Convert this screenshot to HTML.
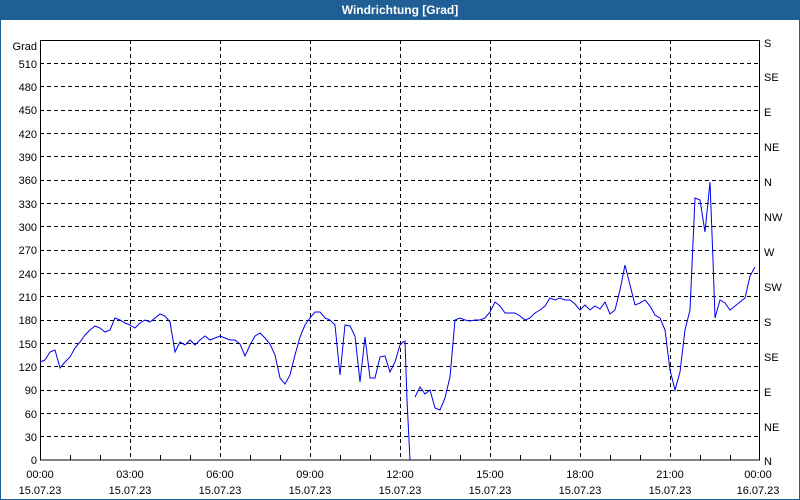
<!DOCTYPE html>
<html><head><style>
body{margin:0;width:800px;height:500px;overflow:hidden;background:#fff;font-family:"Liberation Sans",Tahoma,sans-serif}
</style></head><body>
<svg width="800" height="500" xmlns="http://www.w3.org/2000/svg" style="position:absolute;left:0;top:0">
<rect x="0" y="0" width="800" height="500" fill="#fff"/>
<rect x="0.5" y="0.5" width="799" height="499" fill="none" stroke="#1f5f95"/>
<rect x="0" y="0" width="800" height="20" fill="#1f5f95"/>
<text x="400" y="14" fill="#fff" font-size="12" font-weight="bold" text-anchor="middle">Windrichtung [Grad]</text>
<g stroke="#000" stroke-dasharray="4,3" stroke-width="1">
<line x1="40" y1="63.5" x2="760" y2="63.5"/><line x1="40" y1="86.5" x2="760" y2="86.5"/><line x1="40" y1="110.5" x2="760" y2="110.5"/><line x1="40" y1="133.5" x2="760" y2="133.5"/><line x1="40" y1="156.5" x2="760" y2="156.5"/><line x1="40" y1="180.5" x2="760" y2="180.5"/><line x1="40" y1="203.5" x2="760" y2="203.5"/><line x1="40" y1="226.5" x2="760" y2="226.5"/><line x1="40" y1="250.5" x2="760" y2="250.5"/><line x1="40" y1="273.5" x2="760" y2="273.5"/><line x1="40" y1="296.5" x2="760" y2="296.5"/><line x1="40" y1="320.5" x2="760" y2="320.5"/><line x1="40" y1="343.5" x2="760" y2="343.5"/><line x1="40" y1="366.5" x2="760" y2="366.5"/><line x1="40" y1="390.5" x2="760" y2="390.5"/><line x1="40" y1="413.5" x2="760" y2="413.5"/><line x1="40" y1="436.5" x2="760" y2="436.5"/>
<line x1="130.5" y1="40" x2="130.5" y2="460"/><line x1="220.5" y1="40" x2="220.5" y2="460"/><line x1="310.5" y1="40" x2="310.5" y2="460"/><line x1="400.5" y1="40" x2="400.5" y2="460"/><line x1="490.5" y1="40" x2="490.5" y2="460"/><line x1="580.5" y1="40" x2="580.5" y2="460"/><line x1="670.5" y1="40" x2="670.5" y2="460"/>
</g>
<rect x="40.5" y="40.5" width="719" height="419.5" fill="none" stroke="#000"/>
<g stroke="#000">
<line x1="70.5" y1="455" x2="70.5" y2="460"/><line x1="100.5" y1="455" x2="100.5" y2="460"/><line x1="160.5" y1="455" x2="160.5" y2="460"/><line x1="190.5" y1="455" x2="190.5" y2="460"/><line x1="250.5" y1="455" x2="250.5" y2="460"/><line x1="280.5" y1="455" x2="280.5" y2="460"/><line x1="340.5" y1="455" x2="340.5" y2="460"/><line x1="370.5" y1="455" x2="370.5" y2="460"/><line x1="430.5" y1="455" x2="430.5" y2="460"/><line x1="460.5" y1="455" x2="460.5" y2="460"/><line x1="520.5" y1="455" x2="520.5" y2="460"/><line x1="550.5" y1="455" x2="550.5" y2="460"/><line x1="610.5" y1="455" x2="610.5" y2="460"/><line x1="640.5" y1="455" x2="640.5" y2="460"/><line x1="700.5" y1="455" x2="700.5" y2="460"/><line x1="730.5" y1="455" x2="730.5" y2="460"/>
</g>
<g font-size="11" fill="#000" text-anchor="end">
<text x="37" y="50">Grad</text>
<text x="37" y="68">510</text><text x="37" y="91">480</text><text x="37" y="114">450</text><text x="37" y="138">420</text><text x="37" y="161">390</text><text x="37" y="184">360</text><text x="37" y="208">330</text><text x="37" y="231">300</text><text x="37" y="254">270</text><text x="37" y="278">240</text><text x="37" y="301">210</text><text x="37" y="324">180</text><text x="37" y="348">150</text><text x="37" y="371">120</text><text x="37" y="394">90</text><text x="37" y="418">60</text><text x="37" y="441">30</text><text x="37" y="464">0</text>
</g>
<g font-size="11" fill="#000">
<text x="764" y="47">S</text><text x="764" y="81">SE</text><text x="764" y="116">E</text><text x="764" y="151">NE</text><text x="764" y="186">N</text><text x="764" y="221">NW</text><text x="764" y="256">W</text><text x="764" y="291">SW</text><text x="764" y="326">S</text><text x="764" y="361">SE</text><text x="764" y="396">E</text><text x="764" y="431">NE</text><text x="764" y="465">N</text>
</g>
<g font-size="11" fill="#000" text-anchor="middle">
<text x="40" y="478">00:00</text><text x="40" y="494">15.07.23</text>
<text x="130" y="478">03:00</text><text x="130" y="494">15.07.23</text>
<text x="220" y="478">06:00</text><text x="220" y="494">15.07.23</text>
<text x="310" y="478">09:00</text><text x="310" y="494">15.07.23</text>
<text x="400" y="478">12:00</text><text x="400" y="494">15.07.23</text>
<text x="490" y="478">15:00</text><text x="490" y="494">15.07.23</text>
<text x="580" y="478">18:00</text><text x="580" y="494">15.07.23</text>
<text x="670" y="478">21:00</text><text x="670" y="494">15.07.23</text>
<text x="758" y="478">00:00</text><text x="758" y="494">16.07.23</text>
</g>
<g fill="none" stroke="#0000ee" stroke-width="1">
<polyline points="40,362 45,360 50,352 55,350 60,368 65,362 70,357 75,348 80,342 85,335 90,330 95,326 100,328 105,332 110,330 115,318 120,320 125,323 130,325 135,328 140,323 145,320 150,322 155,318 160,314 165,316 170,322 175,352 180,342 185,345 190,340 195,345 200,340 205,336 210,340 215,338 220,336 225,338 230,340 235,340 240,344 245,356 250,345 255,336 260,333 265,338 270,344 275,355 280,378 285,384 290,375 295,355 300,337 305,325 310,318 315,312 320,312 325,318 330,320 335,325 340,375 345,325 350,326 355,336 360,382 365,337 370,378 375,378 380,357 385,356 390,372 395,362 400,345 403,342 405,341 407,400 410,460"/>
<polyline points="415,397 420,387 425,394 430,390 435,408 440,410 445,398 450,377 455,320 460,318 465,320 470,321 475,320 480,320 485,318 490,312 495,302 500,306 505,313 510,313 515,313 520,316 525,320 530,318 535,313 540,310 545,306 550,298 555,300 560,298 565,300 570,300 575,304 580,310 585,305 590,310 595,306 600,309 605,302 610,314 615,310 620,290 625,265 630,285 635,305 640,303 645,300 650,306 655,315 660,318 665,330 670,370 675,390 680,372 685,330 690,310 695,198 700,200 705,232 710,182 713,260 715,318 720,300 725,303 730,310 735,306 740,302 745,298 750,276 755,267"/>
</g>
</svg>
</body></html>
